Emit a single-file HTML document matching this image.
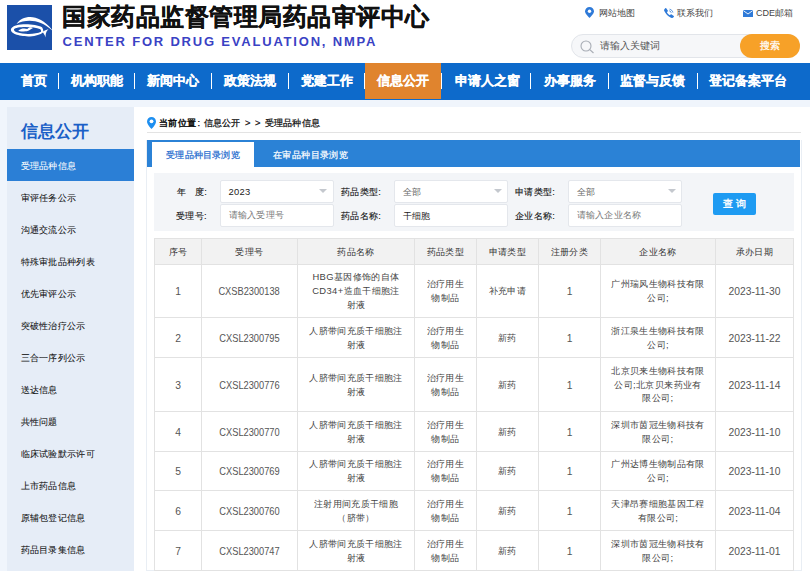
<!DOCTYPE html>
<html><head><meta charset="utf-8">
<style>
*{margin:0;padding:0;box-sizing:border-box}
html,body{width:810px;height:571px;overflow:hidden;background:#fff;font-family:"Liberation Sans",sans-serif;color:#333}
.abs{position:absolute}
#hdr{position:absolute;left:0;top:0;width:810px;height:63px;background:#fff}
#logo{position:absolute;left:7px;top:5px;width:45px;height:45px}
#title{position:absolute;left:62px;top:2.3px;font-size:24px;letter-spacing:0.5px;-webkit-text-stroke:0.3px #111;font-weight:bold;color:#111;white-space:nowrap;line-height:30px}
#en{position:absolute;left:62.5px;top:34px;font-size:13px;font-weight:bold;color:#3a42c4;letter-spacing:1.8px;white-space:nowrap;line-height:16px}
.tl{position:absolute;top:6.5px;font-size:9px;color:#444;line-height:13px;white-space:nowrap}
#search{position:absolute;left:571px;top:34px;width:229px;height:24px;border:1px solid #e2e5ea;border-radius:12px;background:#f6f7f9}
#sbtn{position:absolute;left:740px;top:34px;width:60px;height:24px;border-radius:12px;background:#f7a128;color:#fff;font-size:10px;text-align:center;line-height:24px;-webkit-text-stroke:0.25px #fff;letter-spacing:0.5px}
#nav{position:absolute;left:0;top:63px;width:810px;height:37px;background:#0d6acb}
.ni{position:absolute;top:0;height:36px;line-height:35px;font-size:12.8px;font-weight:bold;color:#fff;-webkit-text-stroke:0.2px #fff;white-space:nowrap}
.sep{position:absolute;top:10px;width:1px;height:15.5px;background:#fff}
#band{position:absolute;left:0;top:100px;width:810px;height:471px;background:#f0f5fc}
#side{position:absolute;left:7px;top:107px;width:127px;height:464px;background:#e6edf7}
#main{position:absolute;left:134px;top:107px;width:676px;height:464px;background:#fff}
.si{position:absolute;left:13.5px;font-size:9px;letter-spacing:0.3px;color:#111;-webkit-text-stroke:0.06px currentColor;line-height:34.5px;white-space:nowrap}

.bc{position:absolute;top:116px;font-size:9.4px;letter-spacing:0.3px;color:#111;-webkit-text-stroke:0.25px #111;line-height:13px;white-space:nowrap}
#panel{position:absolute;left:146px;top:140px;width:656px;height:431px;border:1px solid #e9eef4;border-top:none;background:#fff}
#tabs{position:absolute;left:147px;top:140px;width:653px;height:27px;background:#2b82d6}
#tab1{position:absolute;left:152px;top:142px;width:102px;height:25px;background:#fff;color:#2a6fcf;font-size:8.9px;letter-spacing:0.2px;-webkit-text-stroke:0.25px #2a6fcf;line-height:27px;text-align:center;white-space:nowrap}
#tab2{position:absolute;left:273px;top:142px;color:#fff;font-size:8.9px;letter-spacing:0.4px;-webkit-text-stroke:0.2px #fff;line-height:27px;white-space:nowrap}
#filter{position:absolute;left:154px;top:173px;width:640px;height:58px;background:#f3f5f8}
.lb{position:absolute;font-size:9.4px;letter-spacing:0.3px;color:#111;-webkit-text-stroke:0.1px #111;line-height:24px;white-space:nowrap}
.inp{position:absolute;height:22.5px;background:#fff;border:1px solid #e4e7ec;border-radius:2px;font-size:9.4px;letter-spacing:0.3px;line-height:21.5px;padding-left:7.5px;color:#222;white-space:nowrap}
.inp.g{color:#666}
.inp.ph{color:#777;font-size:9px}
.caret{position:absolute;width:0;height:0;border-left:4.5px solid transparent;border-right:4.5px solid transparent;border-top:4px solid #c4c8ce}
#qbtn{position:absolute;left:713px;top:193px;width:43px;height:22px;background:#1e9bf2;border-radius:2px;color:#fff;font-size:9.6px;line-height:22px;text-align:center;-webkit-text-stroke:0.35px #fff;letter-spacing:2.5px;text-indent:2px}
table{position:absolute;left:154px;top:238px;border-collapse:collapse;table-layout:fixed;width:639px}
td,th{border:1px solid #e2e2e2;font-size:9.4px;letter-spacing:0.37px;color:#444;text-align:center;vertical-align:middle;font-weight:normal;line-height:13.8px;padding:0}
td.n{letter-spacing:0;font-size:10.3px;color:#555}
.sx{display:inline-block;transform:scaleX(0.9);position:relative;top:1.2px}
.sy{position:relative;top:1.2px}
th{background:#f2f2f2;height:26px;color:#333}
</style></head><body>
<div id="hdr">
  <svg id="logo" width="45" height="45" viewBox="0 0 45 45"><rect width="45" height="45" fill="#1b50a9"/>
<path d="M9.5 18.9C16 9.5 33 7.6 46.5 26.8C34 13.6 19 13.9 9.5 18.9Z" fill="#fff"/>
<path d="M35 22.2C28 18.6 8 17.5 4.2 23.6C2 28.6 13 31.8 23 31.4C29 31.2 33.5 29.5 36 27.5C37.5 29.5 38 31 38.8 32.5C38.3 29.5 38.8 26.5 41.5 24.2C39 24.6 37.5 25.6 36.4 26.5C36.3 25 35.9 23.4 35 22.2ZM33.4 24.2C34 25 34.2 26 34 26.8C31 28.3 26 29 21 28.9C13 28.7 6.4 27.2 7 24.3C9 21.3 26 21.2 33.4 24.2Z" fill="#fff"/>
<path d="M11.2 25.8C14 23 18 23.2 20.3 24C22 22 24.5 21.8 25.8 23.2C23.5 24 22 25.8 19.8 26.3C17 25.9 14 27.3 11.2 25.8Z" fill="#fff"/></svg>
  <div id="title">国家药品监督管理局药品审评中心</div>
  <div id="en">CENTER FOR DRUG EVALUATION, NMPA</div>
  <div class="tl" style="left:599px">网站地图</div>
  <div class="tl" style="left:677px">联系我们</div>
  <div class="tl" style="left:756px">CDE邮箱</div>
  <div id="search"></div>
  <svg class="abs" style="left:585px;top:7px" width="9" height="11" viewBox="0 0 9 11"><path d="M4.5 0C2 0 0 2 0 4.3 0 7 4.5 11 4.5 11S9 7 9 4.3C9 2 7 0 4.5 0z" fill="#2f7ad8"/><circle cx="4.5" cy="4.2" r="1.7" fill="#fff"/></svg>
  <svg class="abs" style="left:664px;top:8px" width="10" height="10" viewBox="0 0 10 10"><path d="M2.2 0.3L3.8 2.6C4 3 3.9 3.4 3.6 3.6L2.9 4.2C3.6 5.6 4.6 6.6 6 7.3L6.6 6.6C6.9 6.3 7.3 6.2 7.6 6.5L9.8 8C10 8.3 10 8.7 9.8 8.9L8.8 9.8C8.3 10.2 7.6 10.1 7 9.8C4 8.4 1.7 6.1 0.3 3.1C0 2.5 0 1.8 0.4 1.3L1.3 0.3C1.6 0 2 0 2.2 0.3Z" fill="#2f7ad8"/><path d="M5.6 1.2C7.3 1.6 8.5 2.8 8.9 4.5M5.3 2.8C6.2 3 6.9 3.7 7.2 4.7" stroke="#2f7ad8" stroke-width="0.9" fill="none"/></svg>
  <svg class="abs" style="left:743px;top:10px" width="10" height="7" viewBox="0 0 10 7"><rect x="0" y="0" width="10" height="7" fill="#2f7ad8"/><path d="M0.3 0.6L5 4L9.7 0.6" stroke="#fff" stroke-width="0.9" fill="none"/></svg>
  <svg class="abs" style="left:580px;top:40px" width="15" height="14" viewBox="0 0 15 14"><circle cx="6" cy="6" r="5" stroke="#a8adb5" stroke-width="1.1" fill="none"/><path d="M9.8 9.6L13.5 13" stroke="#a8adb5" stroke-width="1.2"/></svg>
  <div class="abs" style="left:600px;top:39px;font-size:10px;color:#555;line-height:14px;white-space:nowrap">请输入关键词</div>
  <div id="sbtn">搜索</div>
</div>
<div id="nav">
  <div class="ni" style="left:20.5px">首页</div>
  <div class="sep" style="left:58px"></div>
  <div class="ni" style="left:70.5px">机构职能</div>
  <div class="sep" style="left:134px"></div>
  <div class="ni" style="left:147px">新闻中心</div>
  <div class="sep" style="left:211px"></div>
  <div class="ni" style="left:224px">政策法规</div>
  <div class="sep" style="left:288px"></div>
  <div class="ni" style="left:300.5px">党建工作</div>
  <div class="sep" style="left:364px"></div>
  <div class="ni" style="left:365px;width:76px;background:#e0842e;text-align:center">信息公开</div>
  <div class="sep" style="left:441px"></div>
  <div class="ni" style="left:454.5px">申请人之窗</div>
  <div class="sep" style="left:530px"></div>
  <div class="ni" style="left:543.5px">办事服务</div>
  <div class="sep" style="left:608px"></div>
  <div class="ni" style="left:620px">监督与反馈</div>
  <div class="sep" style="left:697px"></div>
  <div class="ni" style="left:709px">登记备案平台</div>
</div>
<div id="band"></div>
<div id="side">
  <div class="abs" style="left:14px;top:12px;font-size:16.5px;color:#1a5fc7;font-weight:bold;line-height:24px;white-space:nowrap">信息公开</div>
  <div class="abs" style="left:0;top:42px;width:127px;height:32px;background:#2b7fd6"></div>
  <div class="si" style="top:42px;color:#fff">受理品种信息</div>
  <div class="si" style="top:74px">审评任务公示</div>
  <div class="si" style="top:106px">沟通交流公示</div>
  <div class="si" style="top:138px">特殊审批品种列表</div>
  <div class="si" style="top:170px">优先审评公示</div>
  <div class="si" style="top:202px">突破性治疗公示</div>
  <div class="si" style="top:234px">三合一序列公示</div>
  <div class="si" style="top:266px">送达信息</div>
  <div class="si" style="top:298px">共性问题</div>
  <div class="si" style="top:330px">临床试验默示许可</div>
  <div class="si" style="top:362px">上市药品信息</div>
  <div class="si" style="top:394px">原辅包登记信息</div>
  <div class="si" style="top:426px">药品目录集信息</div>
</div>
<div id="main"></div>
<svg class="abs" style="left:147px;top:117px" width="9" height="12" viewBox="0 0 9 12"><path d="M4.5 0C2 0 0 2 0 4.5 0 7.5 4.5 12 4.5 12S9 7.5 9 4.5C9 2 7 0 4.5 0z" fill="#1e8ff0"/><circle cx="4.5" cy="4.3" r="1.9" fill="#fff"/></svg>
<div class="bc" style="left:159px;-webkit-text-stroke:0.45px #111">当前位置</div><div class="bc" style="left:197.5px">:</div><div class="bc" style="left:203.5px">信息公开</div><div class="bc" style="left:245px">&gt;</div><div class="bc" style="left:255px">&gt;</div><div class="bc" style="left:264.5px">受理品种信息</div>
<div class="abs" style="left:147px;top:132px;width:654px;height:1px;background:#e3e3e3"></div>
<div id="panel"></div>
<div id="tabs"></div>
<div id="tab1">受理品种目录浏览</div>
<div id="tab2">在审品种目录浏览</div>
<div id="filter"></div>
<div class="lb" style="left:177px;top:180px">年&nbsp;&nbsp;&nbsp;度:</div>
<div class="inp" style="left:220px;top:180px;width:114px">2023</div><div class="caret" style="left:319px;top:189px"></div>
<div class="lb" style="left:341px;top:180px">药品类型:</div>
<div class="inp g" style="left:394px;top:180px;width:114px">全部</div><div class="caret" style="left:494px;top:189px"></div>
<div class="lb" style="left:515px;top:180px">申请类型:</div>
<div class="inp g" style="left:568px;top:180px;width:114px">全部</div><div class="caret" style="left:668px;top:189px"></div>
<div class="lb" style="left:176px;top:204px">受理号:</div>
<div class="inp ph" style="left:220px;top:204px;width:114px">请输入受理号</div>
<div class="lb" style="left:341px;top:204px">药品名称:</div>
<div class="inp" style="left:394px;top:204px;width:114px">干细胞</div>
<div class="lb" style="left:515px;top:204px">企业名称:</div>
<div class="inp ph" style="left:568px;top:204px;width:114px">请输入企业名称</div>
<div id="qbtn">查询</div>
<table>
<colgroup><col style="width:47px"><col style="width:96px"><col style="width:117px"><col style="width:62px"><col style="width:62px"><col style="width:62px"><col style="width:115px"><col style="width:78px"></colgroup>
<tr><th>序号</th><th>受理号</th><th>药品名称</th><th>药品类型</th><th>申请类型</th><th>注册分类</th><th>企业名称</th><th>承办日期</th></tr>
<tr style="height:53px"><td class="n"><span class="sy">1</span></td><td class="n"><span class="sx">CXSB2300138</span></td><td>HBG基因修饰的自体<br>CD34+造血干细胞注<br>射液</td><td>治疗用生<br>物制品</td><td>补充申请</td><td class="n"><span class="sy">1</span></td><td>广州瑞风生物科技有限<br>公司;</td><td class="n"><span class="sy">2023-11-30</span></td></tr>
<tr style="height:40px"><td class="n"><span class="sy">2</span></td><td class="n"><span class="sx">CXSL2300795</span></td><td>人脐带间充质干细胞注<br>射液</td><td>治疗用生<br>物制品</td><td>新药</td><td class="n"><span class="sy">1</span></td><td>浙江泉生生物科技有限<br>公司;</td><td class="n"><span class="sy">2023-11-22</span></td></tr>
<tr style="height:54px"><td class="n"><span class="sy">3</span></td><td class="n"><span class="sx">CXSL2300776</span></td><td>人脐带间充质干细胞注<br>射液</td><td>治疗用生<br>物制品</td><td>新药</td><td class="n"><span class="sy">1</span></td><td>北京贝来生物科技有限<br>公司;北京贝来药业有<br>限公司;</td><td class="n"><span class="sy">2023-11-14</span></td></tr>
<tr style="height:40px"><td class="n"><span class="sy">4</span></td><td class="n"><span class="sx">CXSL2300770</span></td><td>人脐带间充质干细胞注<br>射液</td><td>治疗用生<br>物制品</td><td>新药</td><td class="n"><span class="sy">1</span></td><td>深圳市茵冠生物科技有<br>限公司;</td><td class="n"><span class="sy">2023-11-10</span></td></tr>
<tr style="height:39px"><td class="n"><span class="sy">5</span></td><td class="n"><span class="sx">CXSL2300769</span></td><td>人脐带间充质干细胞注<br>射液</td><td>治疗用生<br>物制品</td><td>新药</td><td class="n"><span class="sy">1</span></td><td>广州达博生物制品有限<br>公司;</td><td class="n"><span class="sy">2023-11-10</span></td></tr>
<tr style="height:40px"><td class="n"><span class="sy">6</span></td><td class="n"><span class="sx">CXSL2300760</span></td><td>注射用间充质干细胞<br>（脐带）</td><td>治疗用生<br>物制品</td><td>新药</td><td class="n"><span class="sy">1</span></td><td>天津昂赛细胞基因工程<br>有限公司;</td><td class="n"><span class="sy">2023-11-04</span></td></tr>
<tr style="height:40px"><td class="n"><span class="sy">7</span></td><td class="n"><span class="sx">CXSL2300747</span></td><td>人脐带间充质干细胞注<br>射液</td><td>治疗用生<br>物制品</td><td>新药</td><td class="n"><span class="sy">1</span></td><td>深圳市茵冠生物科技有<br>限公司;</td><td class="n"><span class="sy">2023-11-01</span></td></tr>
<tr style="height:40px"><td class="n"><span class="sy">8</span></td><td class="n"><span class="sx">CXSL2300746</span></td><td>人脐带间充质干细胞注<br>射液</td><td>治疗用生<br>物制品</td><td>新药</td><td class="n"><span class="sy">1</span></td><td>深圳市茵冠生物科技有<br>限公司;</td><td class="n"><span class="sy">2023-11-01</span></td></tr>
</table>
</body></html>
